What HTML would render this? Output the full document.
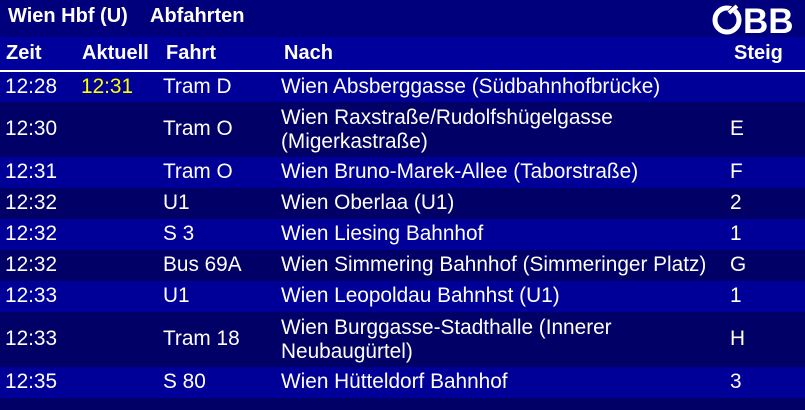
<!DOCTYPE html>
<html><head><meta charset="utf-8"><style>
body{margin:0;width:805px;height:410px;background:#000066;font-family:"Liberation Sans",sans-serif;color:#fff;overflow:hidden;position:relative}
.top{position:absolute;left:0;top:0;width:805px;height:37px;background:#00007c}
.title{position:absolute;left:8px;top:5px;font-weight:bold;font-size:20px;white-space:pre}
.hdr{position:absolute;left:0;top:37px;width:805px;height:33px;background:#00009c;border-bottom:2px solid #fff}
.hdr span{position:absolute;top:5px;font-weight:bold;font-size:20px}
.row{position:absolute;left:0;width:805px;font-size:20.8px}
.row span{position:absolute;line-height:24px;white-space:nowrap}
.a{background:#000099}.b{background:#000066}
</style></head><body>
<div class="top"></div>
<div class="title" style="left:8px">Wien Hbf (U)</div><div class="title" style="left:150px">Abfahrten</div>
<svg style="position:absolute;left:710px;top:2px" width="92" height="34" viewBox="0 0 92 34">
<circle cx="17" cy="18" r="12" fill="none" stroke="#fff" stroke-width="5"/>
<path d="M20 10 L28 2" stroke="#00007c" stroke-width="5"/>
<path d="M19 11 L27 4" stroke="#fff" stroke-width="4"/>
<text x="33" y="31" font-family="Liberation Sans" font-weight="bold" font-size="35" fill="#fff">BB</text>
</svg>
<div class="hdr"><span style="left:6px">Zeit</span><span style="left:82px">Aktuell</span><span style="left:166px">Fahrt</span><span style="left:284px">Nach</span><span style="left:734px">Steig</span></div>

<div class="row a" style="top:72px;height:30px"><span style="left:5px;top:3px">12:28</span><span style="left:81px;top:3px;color:#ffff00">12:31</span><span style="left:163px;top:3px">Tram D</span><span style="left:281px;top:3px">Wien Absberggasse (Südbahnhofbrücke)</span></div>
<div class="row b" style="top:102px;height:55px"><span style="left:5px;top:15px">12:30</span><span style="left:163px;top:15px">Tram O</span><span style="left:281px;top:4px">Wien Raxstraße/Rudolfshügelgasse<br>(Migerkastraße)</span><span style="left:730px;top:15px">E</span></div>
<div class="row a" style="top:157px;height:31px"><span style="left:5px;top:3px">12:31</span><span style="left:163px;top:3px">Tram O</span><span style="left:281px;top:3px">Wien Bruno-Marek-Allee (Taborstraße)</span><span style="left:730px;top:3px">F</span></div>
<div class="row b" style="top:188px;height:31px"><span style="left:5px;top:3px">12:32</span><span style="left:163px;top:3px">U1</span><span style="left:281px;top:3px">Wien Oberlaa (U1)</span><span style="left:730px;top:3px">2</span></div>
<div class="row a" style="top:219px;height:31px"><span style="left:5px;top:3px">12:32</span><span style="left:163px;top:3px">S 3</span><span style="left:281px;top:3px">Wien Liesing Bahnhof</span><span style="left:730px;top:3px">1</span></div>
<div class="row b" style="top:250px;height:31px"><span style="left:5px;top:3px">12:32</span><span style="left:163px;top:3px">Bus 69A</span><span style="left:281px;top:3px">Wien Simmering Bahnhof (Simmeringer Platz)</span><span style="left:730px;top:3px">G</span></div>
<div class="row a" style="top:281px;height:31px"><span style="left:5px;top:3px">12:33</span><span style="left:163px;top:3px">U1</span><span style="left:281px;top:3px">Wien Leopoldau Bahnhst (U1)</span><span style="left:730px;top:3px">1</span></div>
<div class="row b" style="top:312px;height:55px"><span style="left:5px;top:15px">12:33</span><span style="left:163px;top:15px">Tram 18</span><span style="left:281px;top:4px">Wien Burggasse-Stadthalle (Innerer<br>Neubaugürtel)</span><span style="left:730px;top:15px">H</span></div>
<div class="row a" style="top:367px;height:31px"><span style="left:5px;top:3px">12:35</span><span style="left:163px;top:3px">S 80</span><span style="left:281px;top:3px">Wien Hütteldorf Bahnhof</span><span style="left:730px;top:3px">3</span></div>
</body></html>
